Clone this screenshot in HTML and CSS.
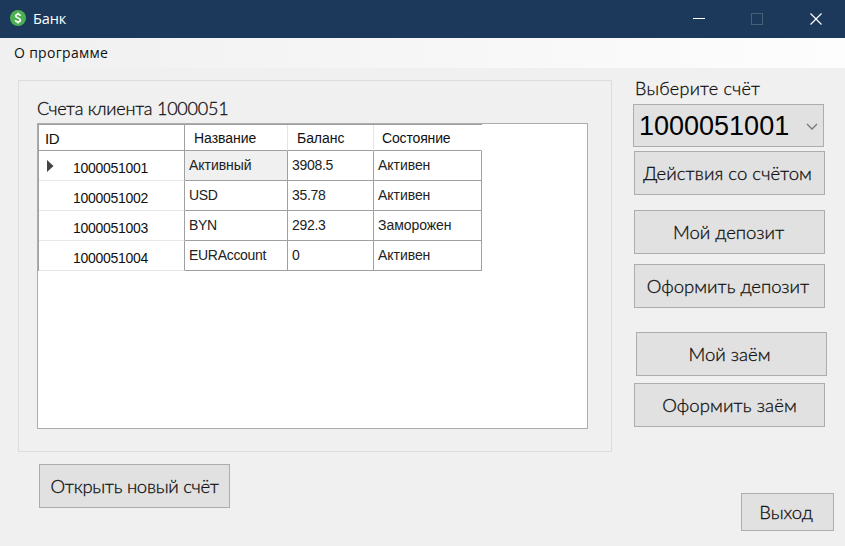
FILE: index.html
```html
<!DOCTYPE html>
<html lang="ru">
<head>
<meta charset="utf-8">
<title>Банк</title>
<link rel="stylesheet" href="styles.css">
</head>
<body>
<div class="window">
  <header class="titlebar">
    <svg class="logo" width="16" height="16" viewBox="0 0 16 16"><circle cx="8" cy="8" r="8" fill="#4caf50"/><path d="M10.4 5.8C10.2 4.7 9.3 4.2 8 4.2S5.7 4.8 5.7 6c0 2.5 4.7 1.4 4.7 4 0 1.200-1 1.900-2.400 1.900S5.600 11.200 5.500 10M8 2.700v1.500M8 11.900v1.500" fill="none" stroke="#fff" stroke-width="1.600"/></svg>
    <span class="title">Банк</span>
    <svg class="controls" width="138" height="38" viewBox="0 0 138 38" fill="none"><path d="M-14 18.500h12" stroke="#fff"/><rect x="44.500" y="13.500" width="11" height="11" stroke="#496079"/><path d="M103.500 13.500l11 11m0-11l-11 11" stroke="#fff" stroke-width="1.200"/></svg>
  </header>
  <nav class="menu"><span>О программе</span></nav>
  <main class="content">
    <section class="left">
      <div class="group">
        <h1 class="caption"><span class="t-accounts">Счета клиента 1000051</span></h1>
        <div class="grid-panel">
          <table class="accounts">
            <colgroup><col class="c-id"><col class="c-name"><col class="c-balance"><col class="c-state"></colgroup>
            <thead><tr><th class="id">ID</th><th>Название</th><th>Баланс</th><th>Состояние</th></tr></thead>
            <tbody>
              <tr><th><svg class="marker" width="7" height="12" viewBox="0 0 7 12"><path d="M0 0l6.500 6L0 12z" fill="#444"/></svg><span>1000051001</span></th><td class="selected cyr">Активный</td><td>3908.5</td><td class="cyr">Активен</td></tr>
              <tr><th><span>1000051002</span></th><td>USD</td><td>35.78</td><td class="cyr">Активен</td></tr>
              <tr><th><span>1000051003</span></th><td>BYN</td><td>292.3</td><td class="cyr">Заморожен</td></tr>
              <tr><th><span>1000051004</span></th><td>EURAccount</td><td>0</td><td class="cyr">Активен</td></tr>
            </tbody>
          </table>
        </div>
      </div>
      <button class="btn open"><span class="t-open">Открыть новый счёт</span></button>
    </section>
    <aside class="actions">
      <div class="label"><span class="t-choose">Выберите счёт</span></div>
      <div class="combo"><span>1000051001</span><svg width="12" height="8" viewBox="0 0 12 8"><path d="M1 1l5 5 5-5" fill="none" stroke="#777" stroke-width="1.300"/></svg></div>
      <button class="btn act"><span class="t-act">Действия со счётом</span></button>
      <button class="btn deposit"><span class="t-deposit">Мой депозит</span></button>
      <button class="btn new-deposit"><span class="t-new-deposit">Оформить депозит</span></button>
      <button class="btn loan"><span class="t-loan">Мой заём</span></button>
      <button class="btn new-loan"><span class="t-new-loan">Оформить заём</span></button>
      <button class="btn exit"><span class="t-exit">Выход</span></button>
    </aside>
  </main>
</div>
</body>
</html>
```
FILE: styles.css
```css
* { box-sizing: border-box; }
body { margin: 0; font-family: "Liberation Sans", sans-serif; background: #f0f0f0; color: #111; }
.window { width: 845px; height: 546px; overflow: hidden; background: #f0f0f0; }
.titlebar { height: 38px; background: #1c395b; display: flex; align-items: center; padding-left: 10px; color: #fff; }
.logo { display: block; margin-top: -2px; }
.title { margin-left: 7px; font: 14.500px/20px "Open Sans", sans-serif; letter-spacing: -0.100px; }
.controls { margin-left: auto; overflow: visible; }
.menu { height: 30px; padding-left: 14px; background: linear-gradient(90deg, #f0f0f0, #fdfdfd); font: 14px/30px "Open Sans", sans-serif; letter-spacing: 0.300px; }
.content { display: flex; height: 478px; padding: 12px 11px 0 18px; }
.left { width: 594px; }
.group { height: 372px; border: 1px solid #dcdcdc; padding: 18px 0 0 18px; }
.caption { margin: 0; height: 24px; font: 300 18px/18px Lato, sans-serif; white-space: nowrap; letter-spacing: -0.230px; }
.caption, .label, .btn { -webkit-text-stroke: 0.300px #111; }
.grid-panel { width: 551px; height: 306px; background: #fff; border: 1px solid #abadb3; }
.accounts { width: 444px; table-layout: fixed; border-collapse: separate; border-spacing: 0; border-top: 1px solid #a0a0a0; border-left: 1px solid #a0a0a0; font-size: 14px; }
.c-id { width: 146px; }
.c-name { width: 103px; }
.c-balance { width: 86px; }
.c-state { width: 108px; }
.accounts th, .accounts td { padding: 0; text-align: left; font-weight: 400; white-space: nowrap; }
.accounts thead th { height: 26px; padding: 1px 0 0 9px; border-right: 1px solid #e5e5e5; border-bottom: 1px solid #a0a0a0; letter-spacing: -0.050px; }
.accounts thead th:last-child { padding-left: 8px; border-right-color: #fff; letter-spacing: -0.150px; }
.accounts thead th:first-child { padding: 2px 0 0 6px; border-right-color: #a0a0a0; font-size: 15px; letter-spacing: -0.500px; }
.accounts tbody th { height: 30px; border-right: 1px solid #a0a0a0; border-bottom: 1px solid #e8e8e8; padding: 4px 0 0 34px; letter-spacing: -0.300px; position: relative; }
.accounts tbody td { height: 30px; border-right: 1px solid #a0a0a0; border-bottom: 1px solid #a0a0a0; padding: 0 0 1px 4px; letter-spacing: -0.300px; color: #222; }
.accounts tbody td.cyr { letter-spacing: -0.050px; }
.marker { position: absolute; left: 8px; top: 9px; }
.selected { background: #f0f0f0; }
.btn { display: flex; align-items: center; justify-content: center; width: 191px; height: 44px; margin: 0; padding: 0 0 1px; border: 1px solid #adadad; border-radius: 0; background: #e1e1e1; color: #111; font: 300 18.500px/24px Lato, sans-serif; white-space: nowrap; }
.open { margin: 12px 0 0 21px; letter-spacing: -0.300px; }
.actions { width: 201px; margin-left: 21px; display: flex; flex-direction: column; }
.label { height: 24px; padding-left: 2px; font: 300 18px/17px Lato, sans-serif; white-space: nowrap; letter-spacing: 0.250px; }
.combo { width: 191px; height: 43px; border: 1px solid #adadad; background: #e1e1e1; display: flex; align-items: center; justify-content: space-between; padding: 2px 5px 0; font-size: 27px; color: #000; }
.act { margin: 4px 0 0 1px; letter-spacing: 0.050px; padding-right: 4px; }
.deposit { margin: 15px 0 0 1px; padding-right: 2px; }
.new-deposit { margin: 10px 0 0 1px; padding-right: 3px; }
.loan { margin: 24px 0 0 3px; padding-right: 4px; }
.new-loan { margin: 7px 0 0 1px; letter-spacing: 0.100px; }
.exit { width: 93px; height: 38px; margin: 66px 0 0 108px; padding-right: 3px; }
```
